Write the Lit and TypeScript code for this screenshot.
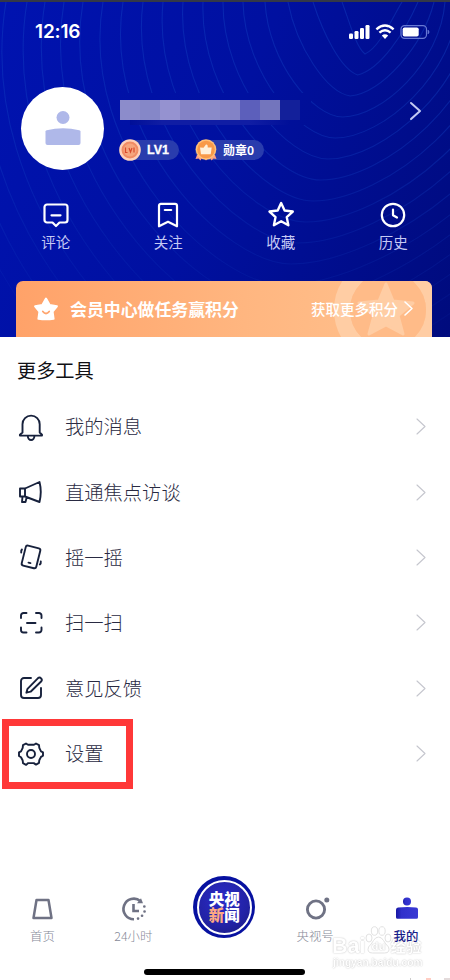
import { LitElement, html, css, svg } from "lit";
import { customElement } from "lit/decorators.js";

const contourTops = [342, 313, 288, 265, 243, 223, 203, 183, 163, 143, 123, 103, 83, 64, 45, 27, 6, -14, -34, -54];
const contours = contourTops.map((left, i) => {
  const bx = 365 - 7.4 * i;
  const by = 54 + 21 * i;
  const h = by - 2;
  const right = i < 3 ? 402 + 16 * i : 445 + (i - 3) * 13;
  const hl = bx - left;
  const hr = right - bx;
  const sharp = Math.max(0, 1 - i / 3);
  const out = Math.max(-0.14, 0.12 - i * 0.025) + sharp * 0.2;
  const cy = 2 + h * (0.53 - sharp * 0.15);
  const dip = by - h * sharp * 0.12;
  return `M${left} 2C${left + hl * out} ${cy} ${bx - hl * 0.38} ${dip} ${bx} ${by}C${bx + hr * 0.38} ${dip} ${right - hr * out} ${cy} ${right} 2`;
});

const mosaic = ["#8c8ccb", "#8587c8", "#9592d0", "#8382c6", "#8788c9", "#8282c6", "#5c5fbb", "#7375bd", "#13209a"];

const star = "M13 2.5l3.2 6.9 7.6.9-5.6 5.2 1.5 7.5-6.7-3.7-6.7 3.7 1.5-7.5-5.6-5.2 7.6-.9z";

const shortcuts = [
  { label: "评论", icon: svg`<path d="M4 2.500h18a2.500 2.500 0 0 1 2.500 2.500v13a2.500 2.500 0 0 1-2.500 2.500h-5.500l-3.500 3.500-3.500-3.500h-5.500a2.500 2.500 0 0 1-2.500-2.500v-13a2.500 2.500 0 0 1 2.500-2.500z"/><path d="M8.500 13.300h9"/>` },
  { label: "关注", icon: svg`<path d="M4 24.300v-20.500a2 2 0 0 1 2-2h14a2 2 0 0 1 2 2v20.500l-9-4.500z"/><path d="M9.800 8h6.400"/>` },
  { label: "收藏", icon: svg`<path transform="translate(-.9 -1.600) scale(1.080)" d="${star}"/>` },
  { label: "历史", icon: svg`<circle cx="13" cy="13" r="11.200"/><path d="M13 7.500v5.700l4 2.300"/>` },
];

const tools = [
  { label: "我的消息", icon: svg`<path d="M4.500 18.500V10.200a8.600 8.600 0 0 1 17.200 0v8.300l2.300 2.200v.9H1.900v-.9z"/><path d="M9.800 22a3.300 4 0 0 0 6.600 0"/>` },
  { label: "直通焦点访谈", icon: svg`<path d="M2 9.500h5v8H2zM7 9.500L21.500 3c1.700 6.500 1.700 13 0 20L7 17.500M4.500 17.500L4 23h3.500l1.200-4.800"/>` },
  { label: "摇一摇", icon: svg`<rect x="5.500" y="2.700" width="15" height="20.500" rx="2" transform="rotate(14 13 13)"/><path d="M10.500 18.600l2 .5M3.900 5.500q-.9 1-.7 3M22.800 17.500q.3 2-1 3"/>` },
  { label: "扫一扫", icon: svg`<path d="M3 8V5.500a2.500 2.500 0 0 1 2.500-2.500H8.500M18 3h3a2.500 2.500 0 0 1 2.500 2.500V8M23.500 17.500V20a2.500 2.500 0 0 1-2.500 2.500h-3M8.500 22.500h-3A2.500 2.500 0 0 1 3 20v-2.500M9 13h8.500"/>` },
  { label: "意见反馈", icon: svg`<path d="M13 3H6a3 3 0 0 0-3 3v14a3 3 0 0 0 3 3h14a3 3 0 0 0 3-3v-7"/><path d="M9.500 13.800L19.800 3.300q1.800-1.500 3.300 0t0 3.200L12.600 16.700l-4.200 1z"/>` },
  { label: "设置", icon: svg`<path d="M8 2.500l2 1.200h6l2-1.200 3 1.700.3 2.600 1.700 3.500 2 1v3.400l-2 1.200-1.700 3.300-.3 2.700-3 1.700-2.200-1.500h-5.600L8 23.900l-3-1.700-.3-2.700L3 16.200 1 15v-3.700l2-1 1.700-3.500L5 4.200z"/><circle cx="13" cy="13" r="4"/>` },
];

@customElement("app-root")
export class AppRoot extends LitElement {
  static styles = css`
    :host {
      display: flex;
      flex-direction: column;
      position: relative;
      width: 450px;
      height: 980px;
      overflow: hidden;
      background: #fff;
      font-family: "Noto Sans CJK SC", sans-serif;
    }
    svg { display: block; fill: none; overflow: visible; flex: none; }
    .hero {
      position: relative;
      box-sizing: border-box;
      height: 337px;
      flex: none;
      display: flex;
      flex-direction: column;
      border-top: 2px solid #343847;
      background: linear-gradient(112deg, #0013b0 0%, #0010a0 48%, #000b7d 100%);
      overflow: hidden;
    }
    .waves { position: absolute; inset: -2px 0 0 0; }
    .status, .profile, .shortcuts, .banner { position: relative; }
    .status { display: flex; height: 57px; padding: 0 19px 0 35px; align-items: center; justify-content: space-between; }
    .time { color: #fff; font: 600 19px/24px Inter, sans-serif; letter-spacing: -.15px; padding-top: 3px; }
    .signals { padding-top: 2px; }
    .profile { display: flex; height: 84px; margin: 28px 29px 0 21px; }
    .avatar { width: 83px; height: 83px; border-radius: 50%; background: #fff; display: grid; place-items: center; }
    .who { flex: 1; padding: 13px 0 0 16px; }
    .name { display: flex; height: 20px; }
    .name i { width: 20px; }
    .shade { width: 160px; height: 5px; margin-left: 10px; background: linear-gradient(90deg, #000f98, #101da4 20%, #101da4 75%, #000f98); }
    .badges { display: flex; margin-top: 15px; gap: 16px; margin-left: -1px; }
    .badge { display: flex; align-items: center; width: 60px; height: 20px; border-radius: 10px; background: #293cad; color: #fff; font-weight: 700; line-height: 20px; gap: 6px; }
    .badge.medal { width: 69px; gap: 6px; font-size: 12px; }
    .lv { font-family: "Liberation Sans", sans-serif; font-size: 12.5px; -webkit-text-stroke: .3px #fff; }
    .forward { margin-top: 15px; }
    .shortcuts { display: grid; grid-template-columns: repeat(4, 112.5px); margin: 31px 0 0 -.5px; height: 79px; }
    .shortcut { display: flex; flex-direction: column; align-items: center; color: #c5c9f4; font-size: 14.5px; line-height: 22px; gap: 3px; }
    .shortcut svg { stroke: #fff; stroke-width: 2.2; stroke-linejoin: round; stroke-linecap: round; }
    .banner { display: flex; align-items: center; box-sizing: border-box; width: 416px; height: 56px; margin-left: 16px; padding: 0 19px 0 17px; border-radius: 7px 7px 0 0; overflow: hidden; background: linear-gradient(90deg, #ffa269, #ffb680 55%, #ffc28f); color: #fff; }
    .banner .coin { position: absolute; right: 0; top: 0; }
    .banner b { margin: -1px 0 0 11px; font-size: 16.9px; font-weight: 700; line-height: 26px; position: relative; }
    .more { margin: -1px 0 0 auto; display: flex; align-items: center; gap: 6px; font-size: 14.5px; font-weight: 500; position: relative; }
    h1 { margin: 18px 0 0 17px; height: 30px; flex: none; font-size: 19.2px; line-height: 30px; font-weight: 400; color: #101014; }
    .list { margin-top: 9px; display: flex; flex-direction: column; }
    .row { display: flex; align-items: center; height: 65.4px; padding: 0 24px 0 18px; font-size: 19.3px; line-height: 28px; font-weight: 300; color: #292a42; }
    .row > svg:first-child { stroke: #17213c; stroke-width: 1.9; stroke-linejoin: round; stroke-linecap: round; }
    .row span { margin: -1px 0 0 21px; flex: 1; }
    .highlight { position: absolute; left: 2px; top: 719px; width: 131px; height: 70px; box-sizing: border-box; border: 7px solid #ff3838; }
    .tabs { margin-top: auto; height: 112px; display: grid; grid-template-columns: repeat(5, 90.9px); margin-left: -3px; flex: none; }
    .tab { display: flex; flex-direction: column; align-items: center; gap: 4px; padding-top: 28px; color: #868997; font-size: 12.4px; line-height: 20px; font-weight: 300; }
    .tab svg { margin-left: 1px; }
    .tab.active { color: #17208a; font-weight: 500; position: relative; z-index: 1; }
    .center { padding-top: 8px; }
    .ring { width: 62px; height: 62px; border-radius: 50%; background: #0711a0; display: grid; place-items: center; }
    .disc { width: 51px; height: 51px; border: 2.5px solid #fff; border-radius: 50%; display: grid; place-content: center; text-align: center; background: radial-gradient(circle at 45% 35%, #2b2bc8, #2222a5 60%, #191979) padding-box; color: #fff; font-size: 15.5px; font-weight: 900; line-height: 16px; box-sizing: content-box; }
    .disc span:last-child { margin-bottom: 2px; }
    .disc em { font-style: normal; color: #ffa982; }
    .home { position: absolute; left: 144px; top: 969px; width: 161px; height: 6px; border-radius: 3px; background: #000; }
    .watermark { position: absolute; left: 332px; top: 925px; width: 96px; height: 44px; color: #fff; text-shadow: 0 0 1.5px #a8a8a8; opacity: .9; }
    .brand { display: flex; height: 31px; font: 700 21.5px/26px "Liberation Sans", sans-serif; }
    .brand > span { padding-top: 8px; }
    .paw { position: relative; width: 26px; height: 29px; }
    .paw span { position: absolute; left: 6px; top: 13px; font-size: 11.5px; line-height: 16px; }
    .brand .cn { font: 700 15.5px/24px "Noto Sans CJK SC", sans-serif; padding-top: 8px; margin-left: -1px; }
    .site { font: 700 10.2px/13px "Liberation Sans", sans-serif; margin-left: 1px; }
    .edge { position: absolute; right: 0; bottom: 0; }
  `;

  chevron(w: number, h: number, color: string, stroke: number) {
    return html`<svg width=${w} height=${h} viewBox="0 0 ${w} ${h}"><path d="M1 1L${w - 1} ${h / 2}L1 ${h - 1}" stroke=${color} stroke-width=${stroke} stroke-linecap="round" stroke-linejoin="round"/></svg>`;
  }

  render() {
    return html`
      <header class="hero">
        <svg class="waves" width="450" height="337" viewBox="0 0 450 337">
          <defs>
            <linearGradient id="fade" x1="0" y1="0" x2="0" y2="1"><stop offset="0" stop-color="#fff"/><stop offset=".4" stop-color="#ddd"/><stop offset="1" stop-color="#222"/></linearGradient>
            <mask id="m" maskUnits="userSpaceOnUse" x="0" y="0" width="450" height="337"><rect width="450" height="337" fill="url(#fade)"/><rect x="119" y="93" width="192" height="32" fill="#000"/></mask>
          </defs>
          <g mask="url(#m)" stroke="#1445c4" stroke-opacity=".42" stroke-width="1.1">${contours.map((d) => svg`<path d=${d}/>`)}</g>
        </svg>
        <div class="status">
          <span class="time">12:16</span>
          <svg class="signals" width="82" height="16" viewBox="0 0 82 16">
            <g fill="#fff"><rect y="9.500" width="4" height="5.500" rx="1.200"/><rect x="5.500" y="7" width="4" height="8" rx="1.200"/><rect x="11" y="4" width="4" height="11" rx="1.200"/><rect x="16.500" y="1" width="4" height="14" rx="1.200"/><path d="M32.800 11.600q3.200-2.500 6.400 0L36 14.900z"/></g>
            <g stroke="#fff" stroke-width="2.400"><path d="M27.400 5.400q8.600-7.600 17.200 0M30.400 8.700q5.600-4.800 11.200 0"/></g>
            <rect x="52" y="1.700" width="25.500" height="12.600" rx="3.600" stroke="#6779d4" stroke-width="1.200"/><rect x="53.700" y="3.400" width="16" height="9.200" rx="1.800" fill="#fff"/><path d="M79 6q2.400 2 0 4z" fill="#6779d4" stroke="#6779d4" stroke-width=".6"/>
          </svg>
        </div>
        <section class="profile">
          <div class="avatar"><svg width="36" height="36" viewBox="0 0 36 36"><g fill="#afb8e9"><circle cx="18" cy="6.500" r="6.500"/><path d="M.5 20.500q0-1 1.200-1.300 16.300-4 32.600 0 1.200.3 1.200 1.300V32a2 2 0 0 1-2 2h-31a2 2 0 0 1-2-2z"/></g></svg></div>
          <div class="who">
            <div class="name">${mosaic.map((c) => html`<i style="background:${c}"></i>`)}</div>
            <div class="shade"></div>
            <div class="badges">
              <div class="badge"><svg width="22" height="22" viewBox="0 0 22 22"><circle cx="11" cy="11" r="10.800" fill="#ffd1ba"/><circle cx="11" cy="11" r="8.500" fill="#f18c64"/><circle cx="11" cy="11" r="6.500" fill="#f6a57d"/><path d="M6.500 8.500v5h2M10 9l1.500 4 1.500-4M15 8.500v5" stroke="#d9492d" stroke-width="1.200"/></svg><span class="lv">LV1</span></div>
              <div class="badge medal"><svg width="22" height="22" viewBox="0 0 22 22"><path d="M2 16l-1.500 4 3-.5 2 2 2-4 3.500 4 3.500-4 2 4 2-2 3 .5L20 16z" fill="#ffa183"/><circle cx="11" cy="10.500" r="10.300" fill="#ffc078"/><circle cx="11" cy="10.500" r="8.800" fill="#f89a49"/><path d="M5 8.500l3.500.3L11 5.500q2-.5 1.700 3h4l-1 6.800H6z" fill="#fff1db"/></svg><span>勋章0</span></div>
            </div>
          </div>
          <div class="forward">${this.chevron(11, 18, "#c3c9f3", 2)}</div>
        </section>
        <nav class="shortcuts">
          ${shortcuts.map((s) => html`<div class="shortcut"><svg width="26" height="26" viewBox="0 0 26 26">${s.icon}</svg><span>${s.label}</span></div>`)}
        </nav>
        <section class="banner">
          <svg class="coin" width="110" height="56" viewBox="0 0 110 56"><circle cx="66" cy="29" r="46" stroke="#ffcda4" stroke-width="16"/><circle cx="66" cy="29" r="38" fill="#ffbb88"/><path d="M64 3l7 17 20 2-15 12.500 5 18.500-17-9-17 9 5-18.500L37 22l20-2z" fill="#ffcda4" stroke="#ffcda4" stroke-width="3" stroke-linejoin="round"/></svg>
          <svg width="26" height="26" viewBox="0 0 26 26"><path d="M13 2.500l3.700 6.600 7.200 1.200-4.300 5.300 1 7.200q-7.600 1-15.200 0l1-7.200L2.100 10.300l7.200-1.200z" fill="#fff" stroke="#fff" stroke-width="2" stroke-linejoin="round"/><path d="M9.800 15.500q3.200 4 6.400 0" stroke="#ffa56e" stroke-width="1.800" stroke-linecap="round"/></svg>
          <b>会员中心做任务赢积分</b>
          <div class="more"><span>获取更多积分</span>${this.chevron(9, 15, "#fff", 1.6)}</div>
        </section>
      </header>
      <h1>更多工具</h1>
      <main class="list">
        ${tools.map((t) => html`<div class="row"><svg width="26" height="26" viewBox="0 0 26 26">${t.icon}</svg><span>${t.label}</span>${this.chevron(10, 17, "#c5c6ce", 1.1)}</div>`)}
      </main>
      <div class="highlight"></div>
      <footer class="tabs">
        <div class="tab"><svg width="26" height="26" viewBox="0 0 26 26"><path d="M6.500 4h12l3 18h-18z" stroke="#6f7284" stroke-width="2.500" stroke-linejoin="round"/></svg><span>首页</span></div>
        <div class="tab"><svg width="26" height="26" viewBox="0 0 26 26" stroke="#6f7284" stroke-width="2.600"><path d="M13 23.300A10.300 10.300 0 1 1 19.500 5.200"/><path d="M16 7.300h6l-2-5z" fill="#6f7284" stroke="none"/><path d="M12.500 8v7h5.500"/><path d="M23.300 10.500h.1M23.500 15.500h.1M21 19.800h.1M17 22.600h.1" stroke-linecap="round"/></svg><span>24小时</span></div>
        <div class="tab center"><div class="ring"><div class="disc"><span>央视</span><span><em>新</em>闻</span></div></div></div>
        <div class="tab"><svg width="26" height="26" viewBox="0 0 26 26"><circle cx="13" cy="13.500" r="8.600" stroke="#6f7284" stroke-width="2.900"/><circle cx="23.800" cy="4" r="2.500" fill="#6f7284"/></svg><span>央视号</span></div>
        <div class="tab active"><svg width="26" height="26" viewBox="0 0 26 26"><defs><linearGradient id="p" x1="0" x2="1"><stop stop-color="#1717a2"/><stop offset=".25" stop-color="#3030cb"/><stop offset="1" stop-color="#3939d4"/></linearGradient></defs><circle cx="13" cy="5.500" r="4" fill="url(#p)"/><path d="M2 13.700q0-2 2-2.200 9.500-1 18 0 2 .2 2 2v7.700q0 1.500-1.500 1.500h-19Q2 22.700 2 21.200z" fill="url(#p)"/></svg><span>我的</span></div>
      </footer>
      <div class="watermark">
        <div class="brand"><span>Bai</span><div class="paw"><svg width="27" height="29" viewBox="0 0 27 29" stroke="#dedede"><g fill="#fff"><ellipse cx="4" cy="13" rx="3" ry="4"/><ellipse cx="9.500" cy="6" rx="3.200" ry="4.300"/><ellipse cx="17" cy="6" rx="3.200" ry="4.300"/><ellipse cx="23" cy="13" rx="3" ry="4"/><path d="M13.500 12q3 0 5 3.500t5 6.500q2 6-4 6h-12q-6 0-4-6 3-3 5-6.500t5-3.500z"/></g></svg><span>du</span></div><span class="cn">经验</span></div>
        <div class="site">jingyan.baidu.com</div>
      </div>
      <svg class="edge" width="42" height="2" viewBox="0 0 42 2"><path d="M2 1h1" stroke="#999"/><path d="M18 1h5" stroke="#ff9d89"/><path d="M36 1h6" stroke="#c8b7b7"/></svg>
      <div class="home"></div>
    `;
  }
}
